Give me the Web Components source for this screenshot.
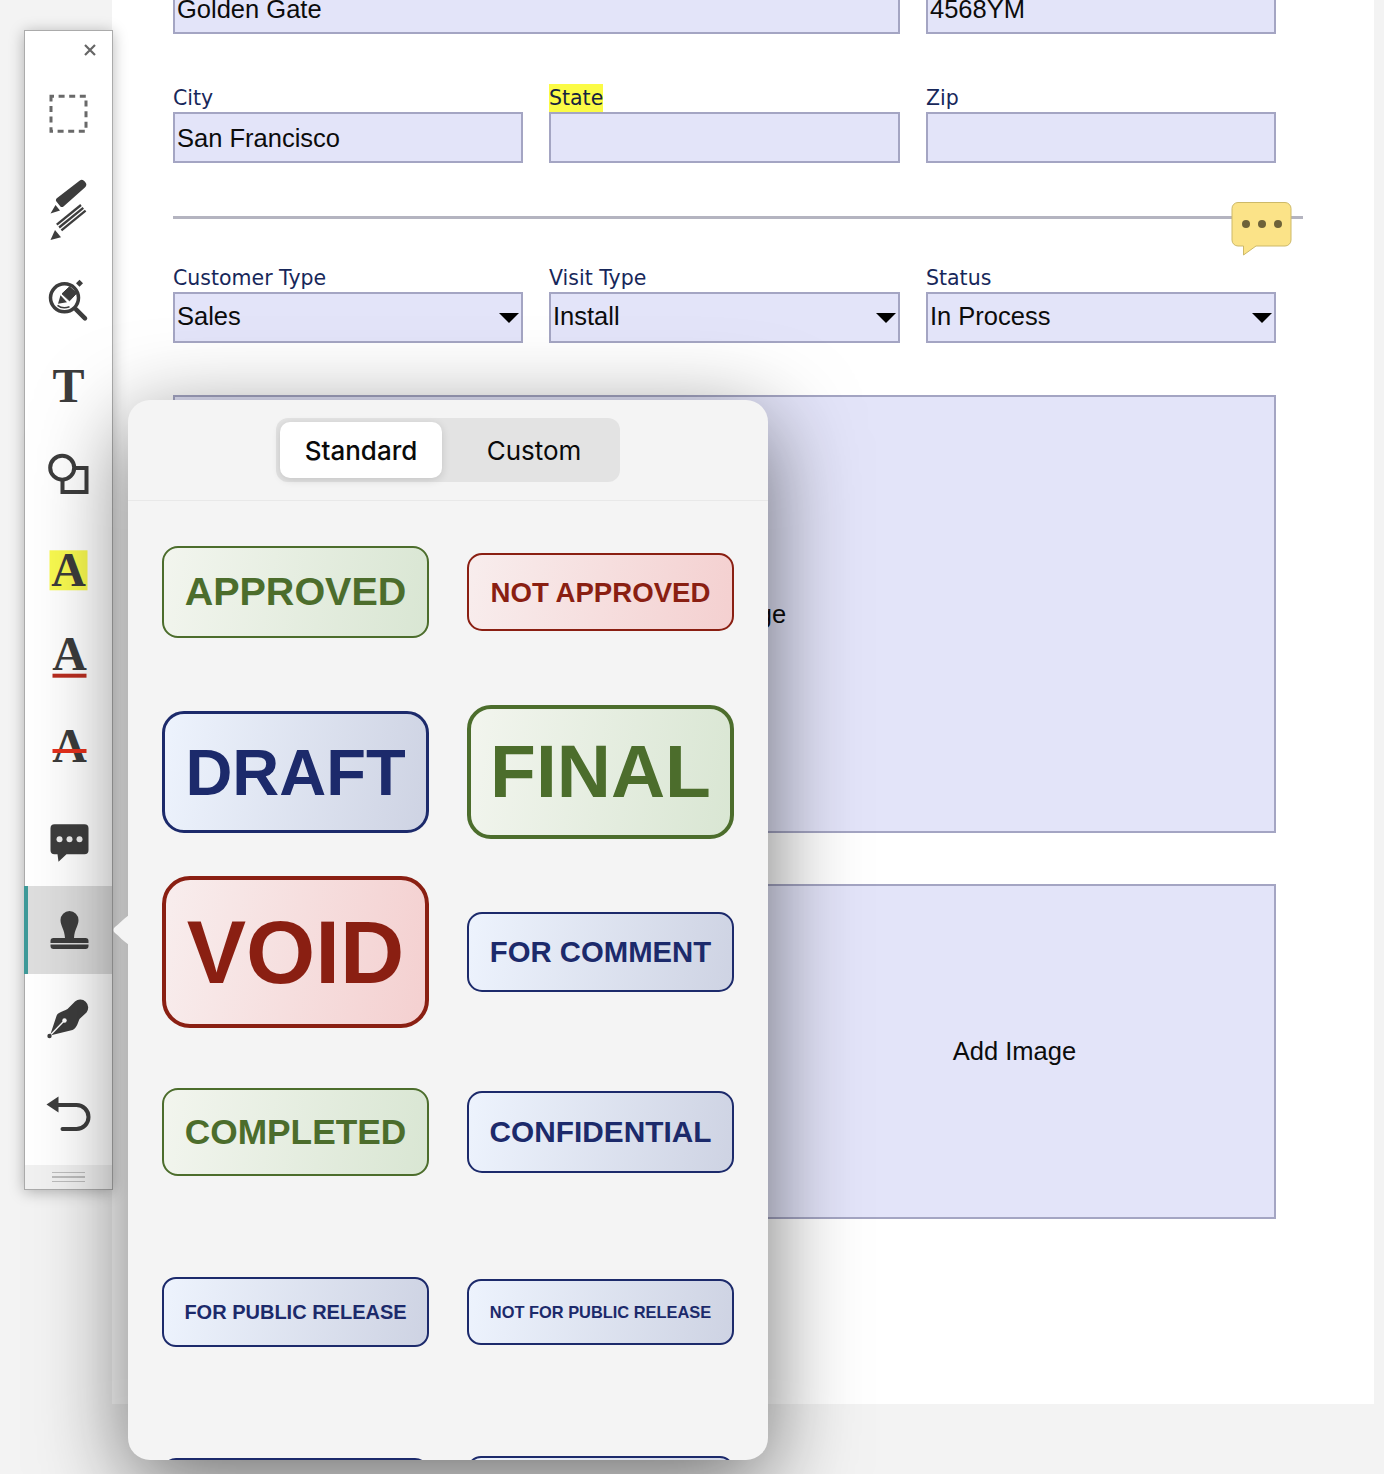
<!DOCTYPE html>
<html lang="en">
<head>
<meta charset="utf-8">
<title>Form markup</title>
<style>
  html, body { margin: 0; height: 1474px; overflow: hidden; background: #f3f3f3; }
</style>
</head>
<body>
<x-form-page></x-form-page>
<x-toolbar></x-toolbar>
<x-stamp-panel></x-stamp-panel>

<script>
class XField extends HTMLElement {
  connectedCallback () {
    const shadow = this.attachShadow({mode: "open"});
    const label = this.getAttribute("label");
    const value = this.getAttribute("value") || "";
    shadow.innerHTML = `<style>
      :host { display: block; min-width: 0; }
      label {
        display: block;
        height: 26px;
        font: 20.5px/24px "DejaVu Sans", sans-serif;
        color: #17275a;
      }
      label span { display: inline-block; height: 26px; margin-top: -2px; padding-top: 2px; }
      :host([flagged]) label span { background: #fbfb45; color: #16223f; }
      .box {
        display: flex;
        align-items: center;
        box-sizing: border-box;
        height: 51px;
        padding: 1px 2px 0;
        background: #e3e4f9;
        border: 2px solid #a4a5c3;
        font: 25.5px "Liberation Sans", Arial, sans-serif;
        color: #0c0c0c;
      }
      :host([select]) .box { padding: 0 2px 2px; }
      .arrow {
        margin: 2px 0 0 auto;
        width: 0;
        height: 0;
        border: 10.5px solid transparent;
        border-top: 10px solid #000;
        border-bottom: 0;
      }
    </style>
    ${label ? `<label><span>${label}</span></label>` : ""}
    <div class="box"><span>${value}</span>${this.hasAttribute("select") ? `<i class="arrow"></i>` : ""}</div>`;
  }
}

class XImageBox extends HTMLElement {
  connectedCallback () {
    this.attachShadow({mode: "open"}).innerHTML = `<style>
      :host {
        display: flex;
        align-items: center;
        justify-content: center;
        box-sizing: border-box;
        background: #e3e4f9;
        border: 2px solid #a4a5c3;
        font: 25.5px "Liberation Sans", Arial, sans-serif;
        color: #0c0c0c;
      }
    </style><slot></slot>`;
  }
}

class XNote extends HTMLElement {
  connectedCallback () {
    this.attachShadow({mode: "open"}).innerHTML = `<style>
      :host { position: absolute; right: 10px; top: -14px; width: 62px; height: 56px; display: block; }
      svg { display: block; }
    </style>
    <svg width="62" height="56" viewBox="0 0 62 56">
      <path d="M7 .5H54a6 6 0 0 1 6 6V38a6 6 0 0 1-6 6H25L12.5 53V44H7a6 6 0 0 1-6-6V6.5a6 6 0 0 1 6-6z" fill="#fbe388" stroke="#cdb968"/>
      <circle cx="15" cy="22" r="4" fill="#6d6239"/>
      <circle cx="31" cy="22" r="4" fill="#6d6239"/>
      <circle cx="47" cy="22" r="4" fill="#6d6239"/>
    </svg>`;
  }
}

const page_template = document.createElement("template");
page_template.innerHTML = `<style>
  :host {
    display: flex;
    flex-direction: column;
    gap: 52px;
    box-sizing: border-box;
    width: 1262px;
    height: 1421px;
    margin: -17px 0 0 112px;
    padding: 0 98px 0 61px;
    background: #fff;
  }
  .row {
    display: grid;
    grid-template-columns: 350px 351px 350px;
    column-gap: 26px;
  }
  .wide { grid-template-columns: 727px 350px; }
  .rule {
    position: relative;
    height: 3px;
    margin: 1px -27px -5px 0;
    background: #b4b4c0;
  }
  .large { height: 438px; }
  .small { height: 335px; margin-top: -1px; margin-left: 580px; }
</style>
<div class="row wide">
  <x-field value="Golden Gate"></x-field>
  <x-field value="4568YM"></x-field>
</div>
<div class="row">
  <x-field label="City" value="San Francisco"></x-field>
  <x-field label="State" flagged></x-field>
  <x-field label="Zip"></x-field>
</div>
<div class="rule"><x-note></x-note></div>
<div class="row">
  <x-field label="Customer Type" value="Sales" select></x-field>
  <x-field label="Visit Type" value="Install" select></x-field>
  <x-field label="Status" value="In Process" select></x-field>
</div>
<x-image-box class="large">Add Image</x-image-box>
<x-image-box class="small">Add Image</x-image-box>`;

class XFormPage extends HTMLElement {
  connectedCallback () {
    this.attachShadow({mode: "open"}).appendChild(page_template.content.cloneNode(true));
  }
}

class XTool extends HTMLElement {
  connectedCallback () {
    this.attachShadow({mode: "open"}).innerHTML = `<style>
      :host {
        flex: 1 1 0;
        display: flex;
        align-items: center;
        justify-content: center;
        position: relative;
      }
      :host([fixed]) { flex: 0 0 88px; }
      :host([active]) { background: #dedede; }
      :host([active])::before {
        content: "";
        position: absolute;
        left: -1px;
        top: 0;
        bottom: 0;
        width: 4px;
        background: #3f9a99;
      }
    </style><slot></slot>`;
  }
}

const toolbar_template = document.createElement("template");
toolbar_template.innerHTML = `<style>
  :host {
    position: absolute;
    left: 24px;
    top: 30px;
    width: 89px;
    height: 1160px;
    box-sizing: border-box;
    display: flex;
    flex-direction: column;
    background: #fff;
    border: 1px solid #ababab;
    box-shadow: 0 2px 14px rgba(0, 0, 0, .28);
  }
  header {
    flex: 0 0 39px;
    box-sizing: border-box;
    display: flex;
    justify-content: flex-end;
    align-items: center;
    padding: 0 15px 2px 0;
  }
  .main { flex: 0 0 816px; display: flex; flex-direction: column; }
  .undo { flex: 0 0 103px; display: flex; }
  footer {
    flex: 1;
    display: flex;
    flex-direction: column;
    justify-content: center;
    gap: 3px;
    align-items: center;
    background: #f1f1f1;
  }
  footer i { display: block; width: 33px; height: 1.5px; background: #bdbdbd; }
  svg { display: block; overflow: visible; }
  text { font: bold 48px "Liberation Serif", "Times New Roman", serif; fill: #3c3c3c; text-anchor: middle; }
</style>
<header>
  <svg width="14" height="14" viewBox="0 0 14 14"><path d="M2 2l10 10M12 2L2 12" stroke="#666" stroke-width="2.2"/></svg>
</header>
<div class="main">
  <x-tool><svg width="48" height="48" viewBox="44.5 91.3 48 48">
    <rect x="50.5" y="96.5" width="35" height="35" fill="none" stroke="#696969" stroke-width="3" stroke-dasharray="6 4.6" stroke-dashoffset="3"/>
  </svg></x-tool>
  <x-tool><svg width="64" height="64" viewBox="36.5 174 64 64">
    <g fill="#3d3d3d">
      <path d="M79 180.800a3.500 3.500 0 0 1 5 .5l1 1.300a3.500 3.500 0 0 1-.6 4.800L63 206.500c-1 .8-2.500 .8-3.300-.3l-3.800-4.800c-.8-1-.6-2.400.4-3.200z"/>
      <path d="M50 213.500l5-8.500 4.500 5.600z"/>
      <path d="M50 240l4.500-10 6 7.300z"/>
    </g>
    <g stroke="#3d3d3d" stroke-width="2.300">
      <path d="M80.500 205L56.300 224.700"/>
      <path d="M82.800 207.800L58.600 227.500"/>
      <path d="M85.100 210.600L60.900 230.300"/>
    </g>
  </svg></x-tool>
  <x-tool><svg width="48" height="48" viewBox="44.5 272.700 48 48">
    <circle cx="64" cy="297.500" r="14" fill="none" stroke="#3d3d3d" stroke-width="3.500"/>
    <path d="M75.500 309l9 9" stroke="#3d3d3d" stroke-width="4.500" stroke-linecap="round"/>
    <path d="M79 279.500l3.500 3.500-3.500 3.500-3.500-3.500z" fill="#3d3d3d"/>
    <path d="M69 286.500l7 6.500-7 7.500-7.500-7z" fill="#3d3d3d" stroke="#3d3d3d" stroke-linejoin="round"/>
    <path d="M60 295l6.500 7-9 1.500z" fill="#3d3d3d"/>
    <path d="M57 305c3 2.500 8 3 12 1.500" fill="none" stroke="#3d3d3d" stroke-width="1.500"/>
  </svg></x-tool>
  <x-tool><svg width="48" height="48" viewBox="44.5 363.300 48 48">
    <text x="68" y="402">T</text>
  </svg></x-tool>
  <x-tool><svg width="48" height="48" viewBox="44.500 454 48 48">
    <path d="M75.500 468H86V492H62V481" fill="none" stroke="#3d3d3d" stroke-width="4"/>
    <circle cx="61.700" cy="467.700" r="12" fill="none" stroke="#3d3d3d" stroke-width="4"/>
  </svg></x-tool>
  <x-tool><svg width="48" height="48" viewBox="44.500 544.700 48 48">
    <rect x="49" y="550" width="38" height="40" fill="#f9fa50"/>
    <text x="68" y="586">A</text>
  </svg></x-tool>
  <x-tool><svg width="48" height="48" viewBox="44.500 635.300 48 48">
    <text x="69" y="670">A</text>
    <rect x="52" y="674" width="34" height="4" fill="#b92d20"/>
  </svg></x-tool>
  <x-tool><svg width="48" height="48" viewBox="44.500 726 48 48">
    <text x="69" y="762">A</text>
    <rect x="52" y="749" width="34" height="4" fill="#e5301c"/>
  </svg></x-tool>
  <x-tool><svg width="48" height="48" viewBox="44.500 816.700 48 48">
    <path d="M54 824H84a4 4 0 0 1 4 4V850a4 4 0 0 1-4 4H66L58 861.500 57 854H54a4 4 0 0 1-4-4V828a4 4 0 0 1 4-4z" fill="#3d3d3d"/>
    <circle cx="59" cy="839" r="3" fill="#eee"/>
    <circle cx="69" cy="839" r="3" fill="#eee"/>
    <circle cx="79" cy="839" r="3" fill="#eee"/>
  </svg></x-tool>
</div>
<x-tool fixed active><svg width="48" height="48" viewBox="44.500 906 48 48">
  <path d="M69 911a9 9 0 0 1 9 9c0 6-4 9-4.500 18h-9c-.5-9-4.500-12-4.500-18a9 9 0 0 1 9-9z" fill="#3d3d3d"/>
  <path d="M53 938H85a3 3 0 0 1 3 3V943H50V941a3 3 0 0 1 3-3zM50 944.500H88V946a3 3 0 0 1-3 3H53a3 3 0 0 1-3-3z" fill="#3d3d3d"/>
</svg></x-tool>
<x-tool fixed><svg width="48" height="48" viewBox="44.500 994 48 48">
  <path d="M49.500 1035.500L56 1016c1-3.500 6-4.500 11-7l7.500-7.500a8 8 0 0 1 11.500 11L79 1019c-2 5-3 9-7 11z" fill="#3d3d3d"/>
  <path d="M49.500 1035.500L63 1021.500" stroke="#fff" stroke-width="1.400"/>
  <circle cx="64" cy="1020.500" r="2.200" fill="#fff"/>
  <circle cx="49" cy="1036" r="2.200" fill="#3d3d3d"/>
</svg></x-tool>
<div class="undo"><x-tool><svg width="48" height="48" viewBox="44.500 1089.500 48 48">
  <path d="M46 1104L58 1096V1112z" fill="#3d3d3d"/>
  <path d="M57 1104.500H76a12 12 0 0 1 0 24H62" fill="none" stroke="#3d3d3d" stroke-width="4" stroke-linecap="round"/>
</svg></x-tool></div>
<footer><i></i><i></i><i></i></footer>`;

class XToolbar extends HTMLElement {
  connectedCallback () {
    this.attachShadow({mode: "open"}).appendChild(toolbar_template.content.cloneNode(true));
  }
}

class XStamp extends HTMLElement {
  connectedCallback () {
    const height = this.getAttribute("h");
    const size   = this.getAttribute("fs");
    const line   = this.getAttribute("bw") || 2;
    const radius = this.getAttribute("r") || 16;

    this.attachShadow({mode: "open"}).innerHTML = `<style>
      :host {
        display: flex;
        align-items: center;
        justify-content: center;
        box-sizing: border-box;
        height: ${height}px;
        border: ${line}px solid var(--ink);
        border-radius: ${radius}px;
        background: linear-gradient(100deg, var(--from), var(--to));
        color: var(--ink);
        font: bold ${size}px "Liberation Sans", Arial, sans-serif;
        white-space: nowrap;
      }
      :host([tone="green"]) { --ink: #4c6d2c; --from: #f2f5ee; --to: #d9e6d3; }
      :host([tone="red"])   { --ink: #8a1f12; --from: #f8eded; --to: #f4d0d0; }
      :host([tone="blue"])  { --ink: #1c2a6b; --from: #edf3fd; --to: #ced3e3; }
    </style><slot></slot>`;
  }
}

const panel_template = document.createElement("template");
panel_template.innerHTML = `<style>
  :host {
    position: absolute;
    left: 128px;
    top: 400px;
    width: 640px;
    height: 1060px;
    display: block;
    border-radius: 22px;
    background: #f4f4f4;
    box-shadow: 0 24px 90px rgba(0, 0, 0, .55);
  }
  .pointer { position: absolute; left: -15px; top: 515px; display: block; }
  .clip { height: 100%; overflow: hidden; border-radius: 22px; }
  header {
    display: flex;
    justify-content: center;
    align-items: flex-start;
    box-sizing: border-box;
    height: 101px;
    padding-top: 18px;
    border-bottom: 1px solid #e8e8e8;
  }
  .segment {
    display: flex;
    box-sizing: border-box;
    width: 344px;
    height: 64px;
    padding: 4px;
    border-radius: 12px;
    background: #e3e3e3;
    font: 26px Inter, Roboto, sans-serif;
    color: #0a0a0a;
  }
  .segment span { display: flex; align-items: center; justify-content: center; }
  .on {
    width: 162px;
    background: #fff;
    border-radius: 10px;
    box-shadow: 0 2px 8px rgba(0, 0, 0, .14);
    font-weight: 500;
  }
  .off { flex: 1; padding-left: 10px; }
  .grid {
    display: grid;
    grid-template-columns: 267px 267px;
    column-gap: 38px;
    grid-auto-rows: 180px;
    align-items: center;
    padding: 0 34px;
    margin-top: 1px;
  }
</style>
<svg class="pointer" width="16" height="30" viewBox="0 0 16 30"><path d="M16 0V30C10 26 6 21 2 18c-2-1.500-2-4.500 0-6C6 9 10 4 16 0z" fill="#f4f4f4"/></svg>
<div class="clip">
  <header>
    <div class="segment"><span class="on">Standard</span><span class="off">Custom</span></div>
  </header>
  <div class="grid">
    <x-stamp tone="green" h="92" fs="39.500" bw="2.500" r="16" style="padding-bottom:2px">APPROVED</x-stamp>
    <x-stamp tone="red" h="78" fs="27.600" bw="2.200" r="15" style="padding-top:1px">NOT APPROVED</x-stamp>
    <x-stamp tone="blue" h="122" fs="65" bw="3.500" r="22">DRAFT</x-stamp>
    <x-stamp tone="green" h="134" fs="75" bw="4" r="24" style="padding-bottom:2px">FINAL</x-stamp>
    <x-stamp tone="red" h="152" fs="89" bw="4.500" r="28">VOID</x-stamp>
    <x-stamp tone="blue" h="80" fs="29.300" bw="2.200" r="15">FOR COMMENT</x-stamp>
    <x-stamp tone="green" h="88" fs="35.300" bw="2.500" r="16">COMPLETED</x-stamp>
    <x-stamp tone="blue" h="82" fs="29.800" bw="2.200" r="15">CONFIDENTIAL</x-stamp>
    <x-stamp tone="blue" h="70" fs="20" bw="2.200" r="14">FOR PUBLIC RELEASE</x-stamp>
    <x-stamp tone="blue" h="66" fs="16.400" bw="2.200" r="14">NOT FOR PUBLIC RELEASE</x-stamp>
    <x-stamp tone="blue" h="68" fs="20" bw="2.200" r="14"></x-stamp>
    <x-stamp tone="blue" h="72" fs="20" bw="2.200" r="14"></x-stamp>
  </div>
</div>`;

class XStampPanel extends HTMLElement {
  connectedCallback () {
    this.attachShadow({mode: "open"}).appendChild(panel_template.content.cloneNode(true));
  }
}

customElements.define("x-field", XField);
customElements.define("x-image-box", XImageBox);
customElements.define("x-note", XNote);
customElements.define("x-form-page", XFormPage);
customElements.define("x-tool", XTool);
customElements.define("x-toolbar", XToolbar);
customElements.define("x-stamp", XStamp);
customElements.define("x-stamp-panel", XStampPanel);
</script>
</body>
</html>
